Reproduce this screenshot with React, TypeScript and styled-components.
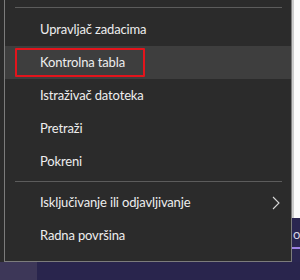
import React from "react";
import styled, { createGlobalStyle } from "styled-components";

const Global = createGlobalStyle`
  html, body { margin: 0; padding: 0; background: #2a2650; }
  body { font-family: "Lato", "Segoe UI", sans-serif; }
`;

const Page = styled.div`
  width: 300px;
  height: 280px;
  display: flex;
  flex-direction: column;
  overflow: hidden;
  background: #2a2650;
`;

const Upper = styled.div`
  display: flex;
  height: 262px;
`;

const LeftGutter = styled.div`
  width: 4px;
  background: #2b2b2b;
`;

const Menu = styled.div`
  width: 286px;
  background: #2b2b2b;
  border: 1px solid #7c7c7c;
  border-top: none;
  padding: 7px 0 8px;
  display: flex;
  flex-direction: column;
`;

const Separator = styled.div<{ $before?: number; $after: number }>`
  height: 1px;
  background: #5c5c5c;
  margin: ${(p) => p.$before ?? 0}px 9px ${(p) => p.$after}px 10px;
`;

const Row = styled.div<{ $active?: boolean }>`
  height: 33px;
  display: flex;
  align-items: center;
  padding-left: ${(p) => (p.$active ? 10 : 35)}px;
  padding-right: 9px;
  background: ${(p) => (p.$active ? "#3e3e3e" : "transparent")};
  color: #eeeeee;
  font-size: 13px;
  letter-spacing: -0.15px;
  line-height: 1;
`;

const Label = styled.span`
  flex: 1;
`;

const Marked = styled.span`
  width: 130px;
  height: 29px;
  box-sizing: border-box;
  border: 2px solid #e3141c;
  border-radius: 1px;
  display: flex;
  align-items: center;
  padding-left: 23px;
`;

const Chevron = styled.svg`
  width: 8px;
  height: 14px;
  margin-right: 2px;
`;

const RightSide = styled.div`
  width: 8px;
  display: flex;
  flex-direction: column;
`;

const WindowEdge = styled.div`
  height: 218px;
  background: #fafafa;
  border-left: 2px solid #cccccc;
`;

const Clipped = styled.div`
  flex: 1;
  display: flex;
  flex-direction: column;
  padding-top: 8px;
  overflow: hidden;
`;

const ClippedText = styled.span`
  color: #d6d4e4;
  font-size: 13px;
  line-height: 16px;
  padding-left: 1px;
  white-space: nowrap;
`;

const AccentLine = styled.div`
  height: 2px;
  margin-top: 5px;
  background: #9d82e6;
`;

const Taskbar = styled.div`
  flex: 1;
  display: flex;
`;

const TaskbarStart = styled.div`
  width: 37px;
  background: #3d3758;
`;

const TaskbarRest = styled.div`
  flex: 1;
  background: #29254d;
`;

export default function App() {
  return (
    <Page>
      <Global />
      <Upper>
        <LeftGutter />
        <Menu>
          <Separator $after={5} />
          <Row><Label>Upravljač zadacima</Label></Row>
          <Row $active>
            <Marked>Kontrolna tabla</Marked>
          </Row>
          <Row><Label>Istraživač datoteka</Label></Row>
          <Row><Label>Pretraži</Label></Row>
          <Row><Label>Pokreni</Label></Row>
          <Separator $before={3} $after={4} />
          <Row>
            <Label>Isključivanje ili odjavljivanje</Label>
            <Chevron viewBox="0 0 8 14">
              <polyline points="1,1 7,7 1,13" fill="none" stroke="#d8d8d8" strokeWidth="1.1" />
            </Chevron>
          </Row>
          <Row><Label>Radna površina</Label></Row>
        </Menu>
        <RightSide>
          <WindowEdge />
          <Clipped>
            <ClippedText>o</ClippedText>
            <AccentLine />
          </Clipped>
        </RightSide>
      </Upper>
      <Taskbar>
        <TaskbarStart />
        <TaskbarRest />
      </Taskbar>
    </Page>
  );
}
